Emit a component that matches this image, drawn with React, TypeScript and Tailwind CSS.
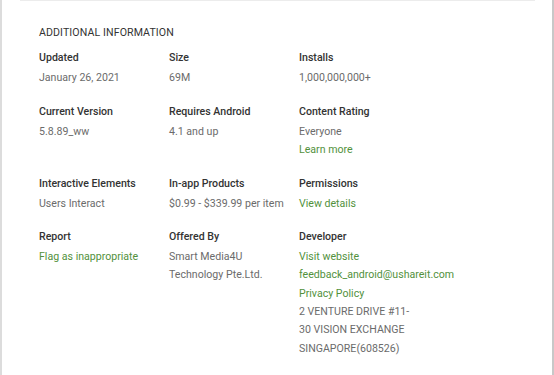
type Item = { label: string; lines: { text: string; link?: boolean }[] };

const rows: Item[][] = [
  [
    { label: "Updated", lines: [{ text: "January 26, 2021" }] },
    { label: "Size", lines: [{ text: "69M" }] },
    { label: "Installs", lines: [{ text: "1,000,000,000+" }] },
  ],
  [
    { label: "Current Version", lines: [{ text: "5.8.89_ww" }] },
    { label: "Requires Android", lines: [{ text: "4.1 and up" }] },
    {
      label: "Content Rating",
      lines: [{ text: "Everyone" }, { text: "Learn more", link: true }],
    },
  ],
  [
    { label: "Interactive Elements", lines: [{ text: "Users Interact" }] },
    { label: "In-app Products", lines: [{ text: "$0.99 - $339.99 per item" }] },
    { label: "Permissions", lines: [{ text: "View details", link: true }] },
  ],
  [
    { label: "Report", lines: [{ text: "Flag as inappropriate", link: true }] },
    {
      label: "Offered By",
      lines: [{ text: "Smart Media4U" }, { text: "Technology Pte.Ltd." }],
    },
    {
      label: "Developer",
      lines: [
        { text: "Visit website", link: true },
        { text: "feedback_android@ushareit.com", link: true },
        { text: "Privacy Policy", link: true },
        { text: "2 VENTURE DRIVE #11-" },
        { text: "30 VISION EXCHANGE" },
        { text: "SINGAPORE(608526)" },
      ],
    },
  ],
];

export default function App() {
  return (
    <div className="flex h-[375px] w-[554px] overflow-hidden bg-white font-['Roboto',sans-serif] text-[10.6px] leading-[18.3px]">
      {/* left edge of the card */}
      <div className="w-[2px] shrink-0 bg-[#dcdcdc]" />
      <div className="flex-1">
        <div className="ml-[18px] mr-[17px] border-t border-[#ececec]" />
        <div className="pl-[37px] pt-[23px]">
          <h2 className="uppercase text-[#333] tracking-[0.1px]">Additional Information</h2>
          <div className="mt-[7px] flex flex-col gap-[15.5px]">
            {rows.map((row, i) => (
              <div key={i} className="grid grid-cols-[130px_130px_1fr]">
                {row.map((item) => (
                  <div key={item.label}>
                    <div className="mb-[1.5px] font-medium text-[#333]">{item.label}</div>
                    {item.lines.map((l) => (
                      <div
                        key={l.text}
                        className={l.link ? "text-[#52913c]" : "text-[#6b6b6b]"}
                      >
                        {l.text}
                      </div>
                    ))}
                  </div>
                ))}
              </div>
            ))}
          </div>
        </div>
      </div>
      {/* right edge */}
      <div className="w-[2px] shrink-0 bg-[#c8c8c8]" />
    </div>
  );
}
